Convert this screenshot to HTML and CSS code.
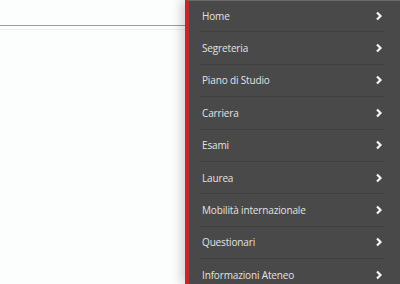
FILE: index.html
```html
<!DOCTYPE html>
<html lang="it">
<head>
  <meta charset="UTF-8" />
  <title>Menu</title>
  <meta name="viewport" content="width=device-width, initial-scale=1.0" />
  <link rel="stylesheet" href="styles.css">
</head>
<body>
  <div class="page">
    <div class="content">
      <div class="header-line"></div>
    </div>

    <aside class="side-menu">
      <ul class="menu-list">
        <li class="menu-item"><span>Home</span><svg class="chev" viewBox="0 0 8 10"><path d="M2 1.5 L5.5 5 L2 8.5"/></svg></li>
        <li class="menu-item"><span>Segreteria</span><svg class="chev" viewBox="0 0 8 10"><path d="M2 1.5 L5.5 5 L2 8.5"/></svg></li>
        <li class="menu-item"><span>Piano di Studio</span><svg class="chev" viewBox="0 0 8 10"><path d="M2 1.5 L5.5 5 L2 8.5"/></svg></li>
        <li class="menu-item"><span>Carriera</span><svg class="chev" viewBox="0 0 8 10"><path d="M2 1.5 L5.5 5 L2 8.5"/></svg></li>
        <li class="menu-item"><span>Esami</span><svg class="chev" viewBox="0 0 8 10"><path d="M2 1.5 L5.5 5 L2 8.5"/></svg></li>
        <li class="menu-item"><span>Laurea</span><svg class="chev" viewBox="0 0 8 10"><path d="M2 1.5 L5.5 5 L2 8.5"/></svg></li>
        <li class="menu-item"><span>Mobilità internazionale</span><svg class="chev" viewBox="0 0 8 10"><path d="M2 1.5 L5.5 5 L2 8.5"/></svg></li>
        <li class="menu-item"><span>Questionari</span><svg class="chev" viewBox="0 0 8 10"><path d="M2 1.5 L5.5 5 L2 8.5"/></svg></li>
        <li class="menu-item"><span>Informazioni Ateneo</span><svg class="chev" viewBox="0 0 8 10"><path d="M2 1.5 L5.5 5 L2 8.5"/></svg></li>
      </ul>
    </aside>
  </div>
</body>
</html>
```

FILE: styles.css
```css
* {
  margin: 0;
  padding: 0;
  box-sizing: border-box;
}

body {
  background: #fcfdfd;
  font-family: 'Open Sans', sans-serif;
  height: 284px;
  overflow: hidden;
}

.page {
  display: flex;
  height: 284px;
}

.content {
  width: 185px;
  padding-top: 25px;
}

.header-line {
  height: 1px;
  background: #8fa1a1;
  box-shadow: 0 4px 0 #eaefef;
}

.side-menu {
  flex: 1;
  background: #494949;
  border-left: 4px solid #c4262e;
  border-top: 1px solid #6a6a6a;
  box-shadow: -4px 0 10px rgba(0, 0, 0, 0.18);
  padding: 0 15px 0 11px;
}

.menu-list {
  list-style: none;
}

.menu-item {
  display: flex;
  align-items: center;
  justify-content: space-between;
  height: 32.4px;
  padding: 0 2px;
  border-bottom: 1px solid #404040;
  color: #e2e2e2;
  font-size: 10px;
  letter-spacing: -0.15px;
}

.menu-item:first-child {
  height: 31.4px;
}

.chev {
  width: 8px;
  height: 10px;
  fill: none;
  stroke: #f4f4f4;
  stroke-width: 2.2;
}
```
